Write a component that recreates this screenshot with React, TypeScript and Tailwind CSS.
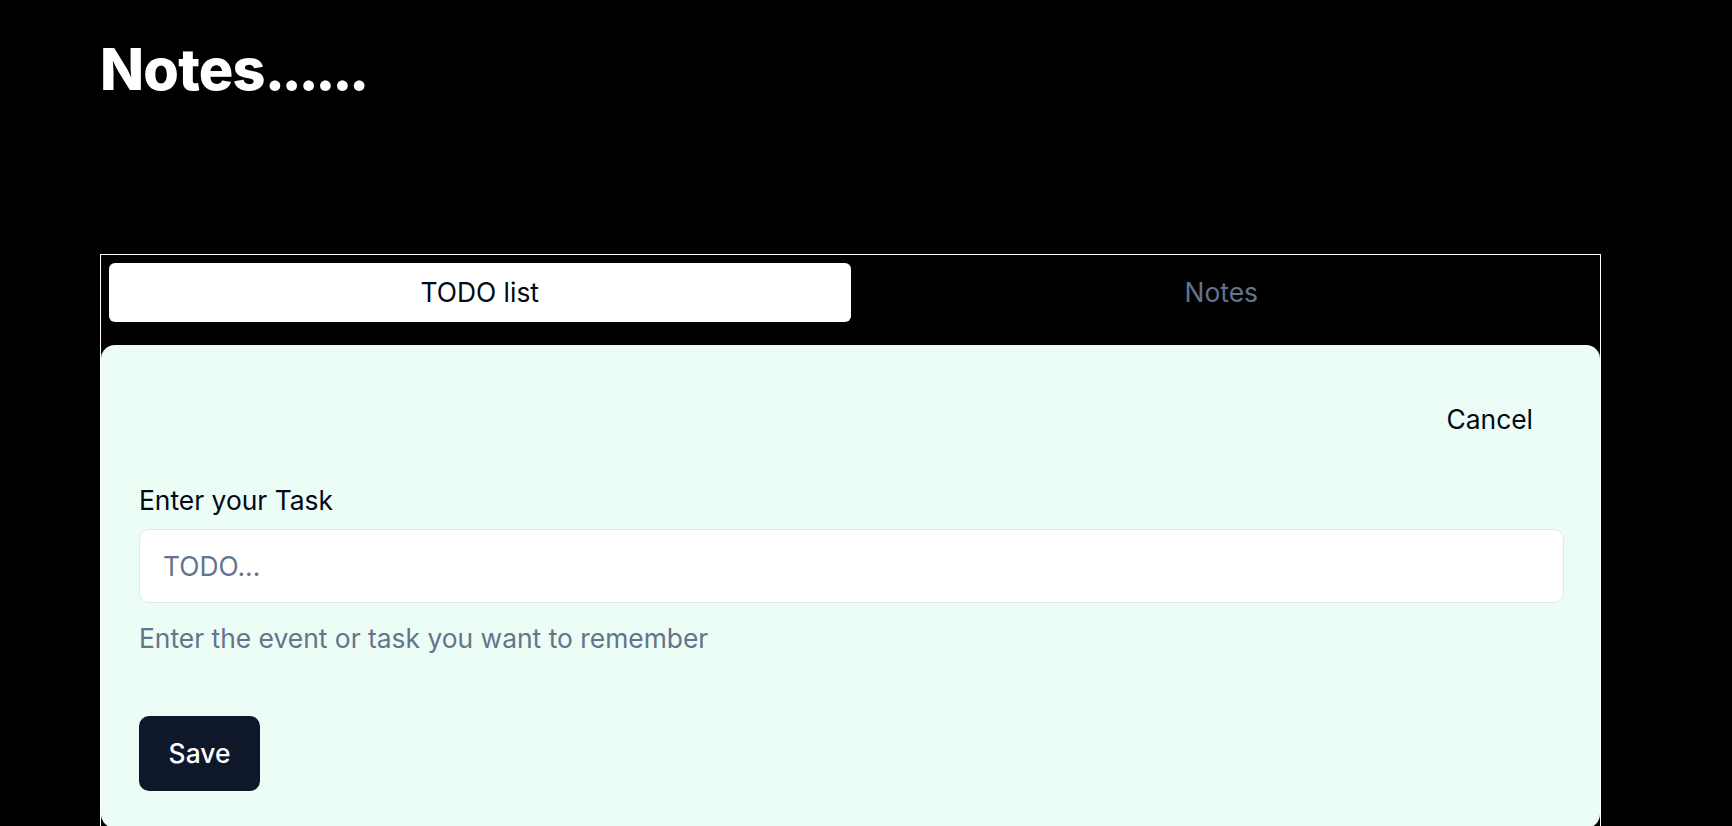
import React from "react";

export default function App() {
  return (
    <div className="min-h-screen bg-black pl-[100px] font-['Inter',sans-serif]">
      <h1 className="pt-[41px] text-[57.6px] font-extrabold leading-none text-white">
        <span className="tracking-[-0.014em]">Notes</span>
        <span className="tracking-[-0.06em]">......</span>
      </h1>
      <div className="mt-[155px] w-[1501px] border border-white">
        <div className="mx-[8px] mt-[8px] grid h-[59px] grid-cols-2">
          <button className="rounded-[6px] bg-white pt-[1px] text-[26.4px] font-normal text-[#020817]">TODO list</button>
          <button className="pt-[1px] text-[26.4px] font-normal text-[#64748b]">Notes</button>
        </div>
        <div className="mt-[23px] h-[483px] rounded-[14px] bg-[#ecfdf5] pl-[38px] pr-[36px] pt-[43px]">
          <div className="flex justify-end pr-[5px]">
            <button className="h-[64px] px-[26px] text-[26.4px] font-normal text-[#020817]">Cancel</button>
          </div>
          <label className="mt-[35px] block text-[26.4px] font-normal leading-none text-[#020817]">Enter your Task</label>
          <input
            placeholder="TODO..."
            className="mt-[16px] block h-[74px] w-full rounded-[10px] border border-[#e2e8f0] bg-white px-[23px] text-[26.4px] text-[#020817] placeholder:text-[#64748b] outline-none"
          />
          <p className="mt-[22px] text-[26.4px] leading-none text-[#64748b]">Enter the event or task you want to remember</p>
          <button className="mt-[65px] h-[75px] w-[121px] rounded-[10px] bg-[#0f172a] text-[26.4px] font-medium text-white">Save</button>
        </div>
      </div>
    </div>
  );
}
